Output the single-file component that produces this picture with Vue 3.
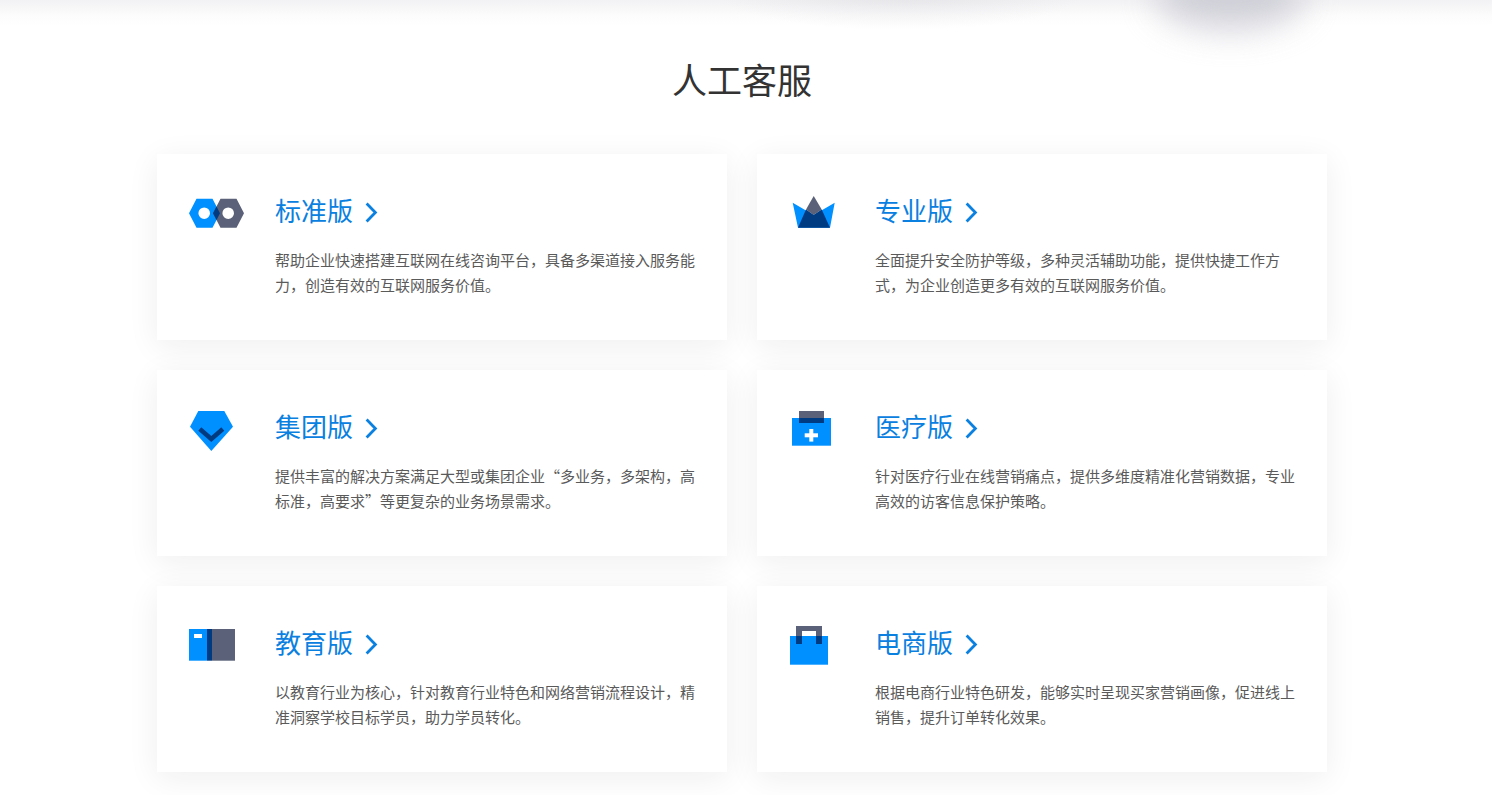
<script setup>
const cards = [
  { key: 'std', title: '标准版', desc: '帮助企业快速搭建互联网在线咨询平台，具备多渠道接入服务能力，创造有效的互联网服务价值。' },
  { key: 'pro', title: '专业版', desc: '全面提升安全防护等级，多种灵活辅助功能，提供快捷工作方式，为企业创造更多有效的互联网服务价值。' },
  { key: 'group', title: '集团版', desc: '提供丰富的解决方案满足大型或集团企业“多业务，多架构，高标准，高要求”等更复杂的业务场景需求。' },
  { key: 'med', title: '医疗版', desc: '针对医疗行业在线营销痛点，提供多维度精准化营销数据，专业高效的访客信息保护策略。' },
  { key: 'edu', title: '教育版', desc: '以教育行业为核心，针对教育行业特色和网络营销流程设计，精准洞察学校目标学员，助力学员转化。' },
  { key: 'shop', title: '电商版', desc: '根据电商行业特色研发，能够实时呈现买家营销画像，促进线上销售，提升订单转化效果。' },
]
</script>

<template>
  <div class="page">
    <div class="top-shade"></div>
    <div class="blob blob-wide"></div>
    <div class="blob blob-dark"></div>
    <h1 class="heading">人工客服</h1>
    <div class="grid">
      <div v-for="c in cards" :key="c.key" class="card">
        <svg class="icon" width="60" height="60" viewBox="0 0 60 60">
          <template v-if="c.key === 'std'">
            <path fill="#0090ff" fill-rule="evenodd" d="M2 29.2 9.5 14.7H25.5L33 29.2 25.5 43.7H9.5ZM17.2 23.4a5.8 5.8 0 1 0 0 11.6 5.8 5.8 0 1 0 0-11.6Z" />
            <path fill="#5b6178" fill-rule="evenodd" d="M26 29.2 33.5 14.7H49.5L57 29.2 49.5 43.7H33.5ZM41.2 23.4a5.8 5.8 0 1 0 0 11.6 5.8 5.8 0 1 0 0-11.6Z" />
            <polygon fill="#003a80" points="26,29.2 29.5,22.4 33,29.2 29.5,36" />
          </template>
          <template v-else-if="c.key === 'pro'">
            <polygon fill="#0090ff" points="5.7,18.7 26.7,31 47.7,18.7 43,43.7 11,43.7" />
            <polygon fill="#5b6178" points="26.7,12 34.7,25.5 26.7,31 19,25.5" />
            <polygon fill="#003a80" points="11,43.7 19,25.5 26.7,31 34.7,25.5 43,43.7" />
          </template>
          <template v-else-if="c.key === 'group'">
            <polygon fill="#0090ff" points="11.3,11 37.3,11 46,26.7 24.3,51 3,26.7" />
            <polyline fill="none" stroke="#003a80" stroke-width="4.5" points="12.8,29 24.3,39 35.8,29" />
          </template>
          <template v-else-if="c.key === 'med'">
            <rect x="5" y="18" width="39" height="27.7" fill="#0090ff" />
            <rect x="12" y="11" width="25" height="7" fill="#5b6178" />
            <rect x="12" y="18" width="25" height="5" fill="#003a80" />
            <rect x="17.7" y="33.3" width="13.3" height="4" fill="#fff" />
            <rect x="22.3" y="29" width="4" height="12.6" fill="#fff" />
          </template>
          <template v-else-if="c.key === 'edu'">
            <rect x="2" y="13" width="18" height="31.7" fill="#0090ff" />
            <rect x="20" y="13" width="5" height="31.7" fill="#003a80" />
            <rect x="25" y="13" width="23" height="31.7" fill="#5b6178" />
            <rect x="7" y="18" width="8" height="4" fill="#fff" />
          </template>
          <template v-else>
            <rect x="3" y="20" width="38" height="28.7" fill="#0090ff" />
            <path fill="#5b6178" d="M9 10H35V20H29V15H15V20H9Z" />
            <rect x="9" y="20" width="6" height="8" fill="#003a80" />
            <rect x="29" y="20" width="6" height="8" fill="#003a80" />
          </template>
        </svg>
        <div class="body">
          <div class="title">
            <span class="title-text">{{ c.title }}</span>
            <svg class="arrow" width="13" height="21" viewBox="0 0 13 21">
              <polyline fill="none" stroke="#0a80e0" stroke-width="2.8" points="1.6,1.5 10.4,10.5 1.6,19.5" />
            </svg>
          </div>
          <p class="desc">{{ c.desc }}</p>
        </div>
      </div>
    </div>
  </div>
</template>

<style>
html, body { background: #fff; overflow: hidden; }
</style>

<style scoped>
.page {
  position: relative;
  height: 795px;
  box-sizing: border-box;
  padding-right: 8px;
  overflow: hidden;
  background: #fff;
  font-family: "Noto Sans CJK SC", "Liberation Sans", sans-serif;
}
.top-shade {
  position: absolute;
  left: 0;
  right: 0;
  top: 0;
  height: 26px;
  background: linear-gradient(#f2f2f4, #fcfcfc 60%, #fff);
}
.blob {
  position: absolute;
  border-radius: 50%;
}
.blob-wide {
  left: 720px;
  top: -40px;
  width: 360px;
  height: 70px;
  background: radial-gradient(closest-side, rgba(200, 200, 208, 0.3), rgba(200, 200, 208, 0));
}
.blob-dark {
  left: 1155px;
  top: -36px;
  width: 150px;
  height: 66px;
  background: #c6c6d0;
  opacity: 0.8;
  filter: blur(17px);
}
.heading {
  position: relative;
  margin: 0;
  padding: 54px 0 50px;
  line-height: 50px;
  text-align: center;
  font-size: 35px;
  font-weight: 400;
  color: #333;
}
.grid {
  display: grid;
  grid-template-columns: 570px 570px;
  grid-auto-rows: 186px;
  gap: 30px;
  justify-content: center;
}
.card {
  display: flex;
  gap: 28px;
  padding: 30px 32px 0 30px;
  box-sizing: border-box;
  background: #fff;
  box-shadow: 0 6px 30px rgba(30, 30, 50, 0.07);
}
.icon {
  flex: none;
}
.body {
  width: 420px;
}
.title {
  display: flex;
  align-items: center;
  gap: 12px;
  height: 54px;
  padding-top: 2px;
  box-sizing: border-box;
  font-size: 26px;
  color: #0a80e0;
}
.title-text {
  margin-bottom: 6px;
}
.arrow {
  flex: none;
}
.desc {
  margin: 0;
  padding-top: 9px;
  font-size: 15px;
  line-height: 25px;
  color: #5a5a5a;
}
</style>
